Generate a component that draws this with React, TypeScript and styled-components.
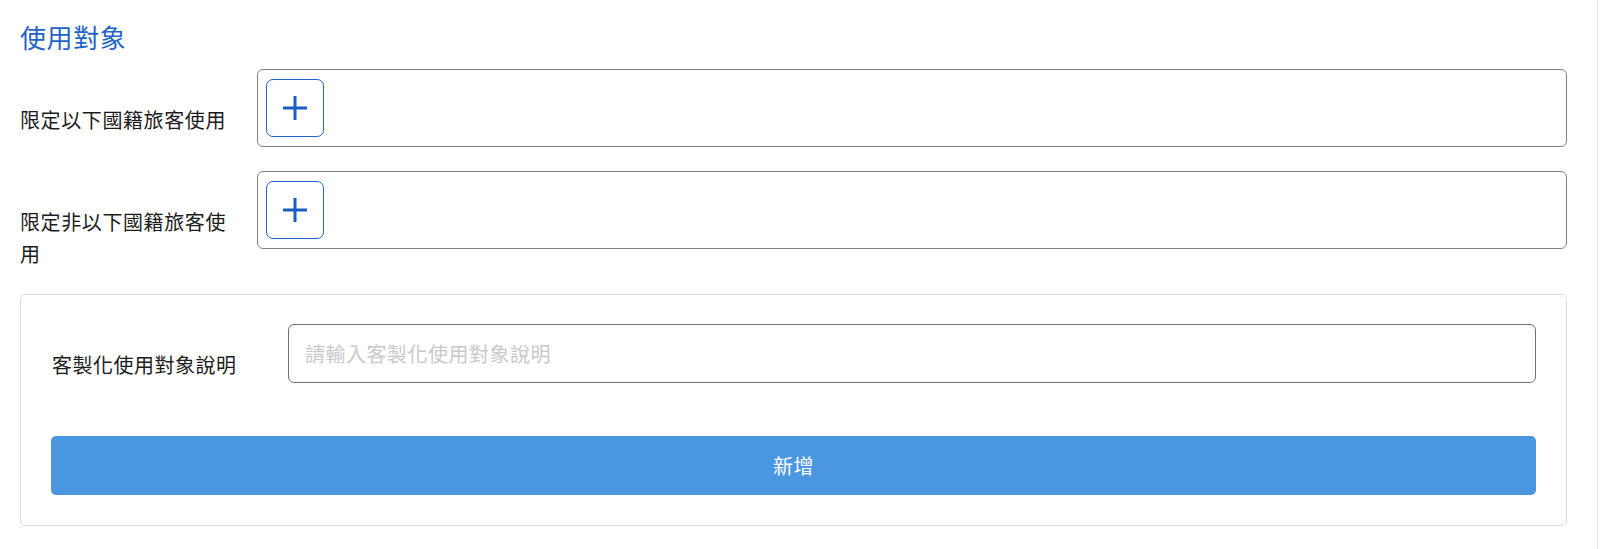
import styled, { createGlobalStyle } from 'styled-components'

const GlobalStyle = createGlobalStyle`
  html, body {
    margin: 0;
    padding: 0;
    background: #fff;
  }
  body {
    font-family: 'Noto Sans CJK TC', 'Noto Sans', sans-serif;
    color: #222;
  }
`

const Page = styled.div`
  box-sizing: border-box;
  width: 1598px;
  min-height: 549px;
  padding: 19px 30px 0 20px;
  border-right: 1px solid #e4e4e4;
`

const Title = styled.h2`
  margin: 0 0 14px;
  font-size: 26px;
  line-height: 36px;
  font-weight: 400;
  letter-spacing: 0.6px;
  color: #1f64c6;
`

const Row = styled.div`
  display: flex;
  align-items: flex-start;
  margin-bottom: 24px;
`

const RowLabel = styled.div`
  flex: 0 0 216px;
  width: 216px;
  margin-right: 21px;
  padding-top: 35px;
  font-size: 20px;
  line-height: 32px;
  letter-spacing: 0.6px;
  color: #1c1c1c;
`

const TagBox = styled.div`
  flex: 1;
  box-sizing: border-box;
  height: 78px;
  padding: 8px;
  border: 1px solid #828282;
  border-radius: 6px;
  display: flex;
  align-items: center;
`

const AddButton = styled.button`
  box-sizing: border-box;
  width: 58px;
  height: 58px;
  padding: 0;
  border: 1px solid #1f63d0;
  border-radius: 7px;
  background: #fff;
  display: flex;
  align-items: center;
  justify-content: center;
  cursor: pointer;
`

const Card = styled.div`
  box-sizing: border-box;
  border: 1px solid #dedede;
  border-radius: 5px;
  padding: 29px 30px 30px;
`

const Field = styled.div`
  display: flex;
  align-items: flex-start;
  margin-bottom: 53px;
`

const FieldLabel = styled.label`
  flex: 0 0 236px;
  padding: 25px 0 0 1px;
  font-size: 20px;
  line-height: 32px;
  letter-spacing: 0.5px;
  color: #1c1c1c;
`

const TextInput = styled.input`
  flex: 1;
  box-sizing: border-box;
  height: 59px;
  padding: 0 16px;
  border: 1px solid #727272;
  border-radius: 6px;
  font-family: inherit;
  font-size: 20px;
  letter-spacing: 0.5px;
  color: #222;
  outline: none;
  &::placeholder {
    color: #c9c9c9;
  }
`

const SubmitButton = styled.button`
  display: block;
  width: 100%;
  height: 59px;
  border: none;
  border-radius: 5px;
  background: #4a97e0;
  color: #fff;
  font-family: inherit;
  font-size: 20px;
  letter-spacing: 0.5px;
  cursor: pointer;
`

const PlusIcon = () => (
  <svg width='26' height='26' viewBox='0 0 26 26'>
    <path d='M13 1v24M1 13h24' stroke='#1a5dc6' strokeWidth='3' fill='none' />
  </svg>
)

const rows = ['限定以下國籍旅客使用', '限定非以下國籍旅客使用']

export default function App() {
  return (
    <Page>
      <GlobalStyle />
      <Title>使用對象</Title>
      {rows.map((label) => (
        <Row key={label}>
          <RowLabel>{label}</RowLabel>
          <TagBox>
            <AddButton aria-label='add'>
              <PlusIcon />
            </AddButton>
          </TagBox>
        </Row>
      ))}
      <Card>
        <Field>
          <FieldLabel>客製化使用對象說明</FieldLabel>
          <TextInput placeholder='請輸入客製化使用對象說明' />
        </Field>
        <SubmitButton>新增</SubmitButton>
      </Card>
    </Page>
  )
}
